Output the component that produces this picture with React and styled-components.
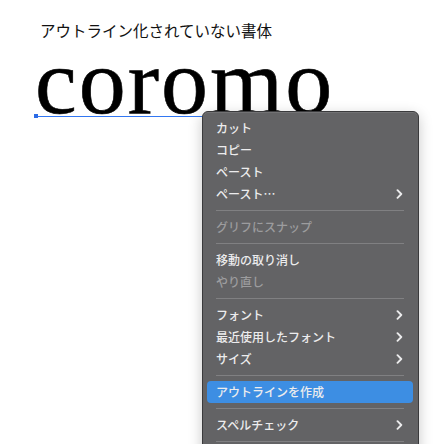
import React from 'react';
import styled, { createGlobalStyle } from 'styled-components';

const GlobalStyle = createGlobalStyle`
  html, body {
    margin: 0;
    padding: 0;
    background: #fff;
    overflow: hidden;
  }
`;

const Page = styled.div`
  position: relative;
  width: 435px;
  height: 444px;
  padding-top: 20px;
  box-sizing: border-box;
  overflow: hidden;
`;

const Title = styled.div`
  margin-left: 40px;
  font: 400 15.5px/20px 'Noto Sans CJK JP', sans-serif;
  color: #111;
  white-space: nowrap;
`;

const Word = styled.div`
  margin: 7px 0 0 35px;
  font: 400 94px/69px 'Liberation Serif', serif;
  letter-spacing: 2px;
  color: #000;
  -webkit-text-stroke: 0.6px #000;
  white-space: nowrap;
`;

const Baseline = styled.div`
  position: relative;
  margin-left: 34px;
  width: 320px;
  height: 1px;
  background: #3277f2;

  &::before {
    position: absolute;
    top: -2px;
    left: 0;
    width: 4px;
    height: 4px;
    background: #2b6be6;
    content: '';
  }
`;

const Menu = styled.div`
  position: absolute;
  top: 111px;
  left: 202px;
  width: 217px;
  box-sizing: border-box;
  padding: 5px 0 40px;
  border: 1px solid #3a3a3c;
  border-radius: 6px;
  background: #636365;
  box-shadow: 0 4px 14px rgba(0, 0, 0, 0.22), inset 0 1px 0 rgba(255, 255, 255, 0.1);
  font: 500 12px/22px 'Noto Sans CJK JP', sans-serif;
`;

const Item = styled.div`
  display: flex;
  align-items: center;
  justify-content: space-between;
  height: 22px;
  margin: ${props => (props.active ? '0 5px 0 4px' : '0')};
  padding: ${props => (props.active ? '0 10px 0 9px' : '0 15px 0 13px')};
  border-radius: 4px;
  background: ${props => (props.active ? '#3d8ee3' : 'transparent')};
  color: ${props => (props.disabled ? '#9c9c9e' : '#ececed')};
  white-space: nowrap;
`;

const Separator = styled.div`
  height: 11px;
  margin: 0 14px 0 13px;
  box-sizing: border-box;
  padding-top: 5px;

  &::after {
    display: block;
    height: 1px;
    background: #808082;
    content: '';
  }
`;

const Chevron = () => (
  <svg width="7" height="10" viewBox="0 0 7 10">
    <path d="M1.5 1.2 L5.3 5 L1.5 8.8" fill="none" stroke="#ececed" strokeWidth="1.9" strokeLinecap="round" strokeLinejoin="round" />
  </svg>
);

const items = [
  { label: 'カット' },
  { label: 'コピー' },
  { label: 'ペースト' },
  { label: 'ペースト…', sub: true },
  'sep',
  { label: 'グリフにスナップ', disabled: true },
  'sep',
  { label: '移動の取り消し' },
  { label: 'やり直し', disabled: true },
  'sep',
  { label: 'フォント', sub: true },
  { label: '最近使用したフォント', sub: true },
  { label: 'サイズ', sub: true },
  'sep',
  { label: 'アウトラインを作成', active: true },
  'sep',
  { label: 'スペルチェック', sub: true },
  'sep',
];

export default function App() {
  return (
    <Page>
      <GlobalStyle />
      <Title>アウトライン化されていない書体</Title>
      <Word>coromo</Word>
      <Baseline />
      <Menu>
        {items.map((item, i) =>
          item === 'sep' ? (
            <Separator key={i} />
          ) : (
            <Item key={i} active={item.active} disabled={item.disabled}>
              <span>{item.label}</span>
              {item.sub && <Chevron />}
            </Item>
          )
        )}
      </Menu>
    </Page>
  );
}
